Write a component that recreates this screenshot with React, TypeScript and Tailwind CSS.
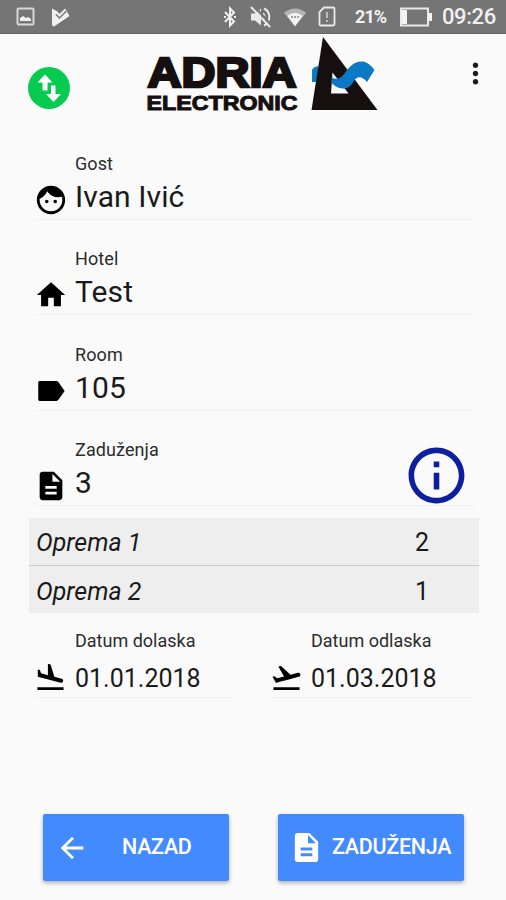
import type { ReactNode } from 'react';
import {
  MdArrowBack,
  MdDescription,
  MdFace,
  MdFlightLand,
  MdFlightTakeoff,
  MdHome,
  MdInfoOutline,
  MdMoreVert
} from 'react-icons/md';

// Square-cornered label, the stock one is rounded
const LabelIcon = () => (
  <svg width="34" height="34" viewBox="0 0 24 24" fill="currentColor">
    <path d="M17.200 5.700c-.35-.5-.8-.7-1.400-.7H4q-1 0-1 1v12q0 1 1 1h11.800c.6 0 1.050-.3 1.400-.8L21.600 12z" />
  </svg>
);

const details = [
  { label: "Gost", value: "Ivan Ivić", icon: <MdFace size={34} /> },
  { label: "Hotel", value: "Test", icon: <MdHome size={34} /> },
  { label: "Room", value: "105", icon: <LabelIcon /> },
  { label: "Zaduženja", value: "3", icon: <MdDescription size={34} />, info: true }
];

const equipment = [
  { name: "Oprema 1", count: 2 },
  { name: "Oprema 2", count: 1 }
];

const StatusBar = () => (
  <div className="flex h-[34px] items-center border-b border-[#636363] bg-[#757575] pl-4 pr-[11px] text-[#f1f1f1]">
    <svg width="19" height="19" viewBox="0 0 19 19" fill="none">
      <rect x="1.5" y="1.5" width="16" height="16" rx="1" stroke="#d8d8d8" strokeWidth="2" />
      <path d="M4 14v-3l3-2 3 2 2-1 3 2v2z" fill="#f1f1f1" />
    </svg>
    <svg className="ml-4" width="19" height="20" viewBox="0 0 19 20">
      <path d="M1 1.500l5.500 3 2 2.500 5.500-5.500 1.500 2L18.500 9 3 19.500 1 18.500z" fill="#f1f1f1" />
      <path d="M5 7.500l3.500 3.500 7-7" fill="none" stroke="#757575" strokeWidth="1.500" />
    </svg>
    <div className="ml-auto flex items-center">
      <svg width="14" height="22" viewBox="0 0 14 22" fill="none" stroke="#f1f1f1" strokeWidth="2">
        <path d="M2 6l9 9.500L7 19.500V2.500l4 4L2 16" />
        <path d="M1 11h2M11 11h2" />
      </svg>
      <svg className="ml-[12px]" width="24" height="24" viewBox="0 0 24 24" fill="none" stroke="#eaeaea" strokeWidth="2">
        <path d="M2 8.500h4l6-5v17l-6-5H2z" fill="#eaeaea" stroke="none" />
        <path d="M14 8.500c2 1.500 2 5.500 0 7M15 3.500c7 3 7 14 0 17" />
        <path d="M5 1l18 20" stroke="#757575" strokeWidth="2.500" />
        <path d="M2 2l19 20" />
      </svg>
      <svg className="ml-[10px]" width="24" height="20" viewBox="0 0 24 20">
        <path d="M1 6C7 0 17 0 23 6L12 19.500z" fill="#b5b5b5" />
        <path d="M4.500 9c4-4 11-4 15 0L12 19z" fill="#f4f4f4" />
        <path d="M9 9v2M12 9v2M15 9v2" stroke="#858585" strokeWidth="1.500" />
      </svg>
      <svg className="ml-[11px]" width="18" height="21" viewBox="0 0 18 21" fill="none" stroke="#eaeaea" strokeWidth="1.800">
        <path d="M6 1.500h9q1.500 0 1.500 1.500v15q0 1.500-1.500 1.500H3Q1.500 19.500 1.500 18V6z" />
        <path d="M9 6v6M9 14v2" stroke="#c5c5c5" />
      </svg>
      <span className="ml-[19px] w-[33px] whitespace-nowrap text-[18px] font-bold leading-none tracking-[-0.9px]">21%</span>
      <svg className="ml-[12px]" width="32" height="20" viewBox="0 0 32 20">
        <rect x="1" y="1.500" width="27" height="17" fill="none" stroke="#eaeaea" strokeWidth="2" />
        <path d="M2 3h5v14H2zM29 6h3v8h-3z" fill="#f4f4f4" />
      </svg>
      <span className="ml-[10px] w-[53px] whitespace-nowrap text-[22px] font-medium leading-none tracking-[-0.4px]">09:26</span>
    </div>
  </div>
);

const Logo = () => (
  <svg width="236" height="80" viewBox="144 34 236 80" className="font-['Liberation_Sans',Arial,sans-serif] font-bold">
    <g fill="#15100f" stroke="#15100f">
      <text x="147.500" y="87" fontSize="43" strokeWidth="2.600" textLength="149" lengthAdjust="spacingAndGlyphs">ADRIA</text>
      <text x="146.500" y="109.500" fontSize="20.500" strokeWidth="1" textLength="151" lengthAdjust="spacingAndGlyphs">ELECTRONIC</text>
    </g>
    <path d="M312 82V70q1-3 6-4v16z" fill="#0d78c4" />
    <path d="M323 37L377.500 110H311.500z" fill="#15100f" />
    <path d="M332.500 72.500L348.500 93.500H331z" fill="#fafafa" />
    <path d="M331.500 77.500c5 2.500 9 1.500 13-4 6-8.500 11-12.500 18-12 5 .5 8.500 4 12 8.500L367 82c-5-6-10-6-13-1-3 5.500-7 8-12 7.500-5-.5-8-3-10.500-5.500z" fill="#0d78c4" />
  </svg>
);

const Header = () => (
  <header className="flex h-[90px] pl-7 pr-[14px]">
    <div className="mt-[33px] flex size-[42px] items-center justify-center rounded-full bg-[#06cb50]">
      <svg width="42" height="42" viewBox="0 0 42 42" fill="#fff">
        <path d="M17 7.500l7.500 8H19.500v8h-5v-8H9.500z" />
        <path d="M25.500 35l-7.500-8h5v-8.500h4.500V27H33z" />
      </svg>
    </div>
    <div className="ml-[74px]">
      <Logo />
    </div>
    <button className="ml-auto mt-[22px] h-[34px] text-[#1c1c1c]">
      <MdMoreVert size={33} />
    </button>
  </header>
);

type FieldProps = {
  label: string;
  value: string;
  icon: ReactNode;
  info?: boolean;
};

const Field = ({ label, value, icon, info }: FieldProps) => (
  <div className="relative flex h-[95.6px] items-end border-b border-[#f0f0f0]">
    <div className="mb-[2px] -ml-px w-[41px] text-black">{icon}</div>
    <div>
      <div className="text-[18px] leading-6 tracking-[0.1px] text-[#2c2c2c]">{label}</div>
      <div className="mb-1 mt-[3px] text-[30px] leading-9 tracking-[0.1px]">{value}</div>
    </div>
    {info && <MdInfoOutline size={67} className="absolute right-[4px] top-[31px] text-[#0d1f9c]" />}
  </div>
);

const DateField = ({ label, value, icon }: FieldProps) => (
  <div className="flex h-[85px] w-[201px] items-end border-b border-[#f0f0f0]">
    <div className="mb-[3px] -ml-px w-[41px] text-black">{icon}</div>
    <div className="whitespace-nowrap">
      <div className="text-[18px] leading-6 text-[#2c2c2c]">{label}</div>
      <div className="mb-[2px] mt-[10px] text-[25px] leading-8">{value}</div>
    </div>
  </div>
);

const App = () => {
  return (
    <div className="flex h-[900px] w-[506px] flex-col overflow-hidden bg-[#fafafa] font-[Roboto,sans-serif] text-[#1a1a1a]">
      <StatusBar />
      <Header />

      <section className="ml-[35px] mr-8">
        {details.map((item) => (
          <Field key={item.label} {...item} />
        ))}
      </section>

      <ul className="ml-[29px] mr-[27px] mt-[12px] h-[95px] bg-[#eeeeee] text-[25px]">
        {equipment.map((item) => (
          <li
            key={item.name}
            className="flex h-[48px] items-center justify-between border-b border-[#cbcbcb] pl-[7px] pr-[50px] pt-[2px] last:h-[47px] last:border-b-0 last:pt-[3px]"
          >
            <span className="italic">{item.name}</span>
            <span>{item.count}</span>
          </li>
        ))}
      </ul>

      <section className="flex gap-[35px] pl-[35px]">
        <DateField label="Datum dolaska" value="01.01.2018" icon={<MdFlightLand size={33} />} />
        <DateField label="Datum odlaska" value="01.03.2018" icon={<MdFlightTakeoff size={33} />} />
      </section>

      <footer className="mb-[19px] mt-auto flex gap-[49px] pl-[43px] text-[21.5px] font-medium tracking-[-0.3px] text-white">
        <button className="flex h-[67px] w-[186px] items-center rounded-[2px] bg-[#448aff] pl-[12px] shadow-[0_2px_4px_rgba(0,0,0,0.3)]">
          <MdArrowBack size={34} />
          <span className="ml-[33px]">NAZAD</span>
        </button>
        <button className="flex h-[67px] w-[186px] items-center rounded-[2px] bg-[#448aff] pl-[11px] shadow-[0_2px_4px_rgba(0,0,0,0.3)]">
          <MdDescription size={35} />
          <span className="ml-[8px]">ZADUŽENJA</span>
        </button>
      </footer>
    </div>
  );
};

export default App;
